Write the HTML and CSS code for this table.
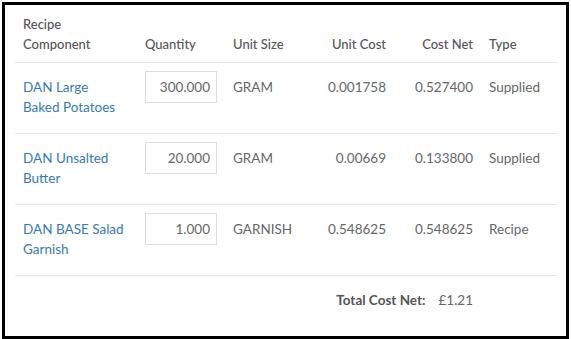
FILE: index.html
```html
<!DOCTYPE html>
<html lang="en">
<head>
    <meta charset="UTF-8">
    <meta name="viewport" content="width=device-width, initial-scale=1.0">
    <title>Recipe Costing</title>
    <link rel="stylesheet" href="styles.css">
</head>
<body>

    <div class="frame">
        <table class="cost-table">
            <colgroup>
                <col class="col-name">
                <col class="col-qty">
                <col class="col-unit">
                <col class="col-cost">
                <col class="col-net">
                <col class="col-type">
            </colgroup>
            <thead>
                <tr>
                    <th class="name">Recipe Component</th>
                    <th>Quantity</th>
                    <th>Unit Size</th>
                    <th class="num">Unit Cost</th>
                    <th class="num">Cost Net</th>
                    <th>Type</th>
                </tr>
            </thead>
            <tbody>
                <tr>
                    <td class="name"><a href="#">DAN Large Baked Potatoes</a></td>
                    <td><input type="text" class="qty-input" value="300.000"></td>
                    <td>GRAM</td>
                    <td class="num">0.001758</td>
                    <td class="num">0.527400</td>
                    <td>Supplied</td>
                </tr>
                <tr>
                    <td class="name"><a href="#">DAN Unsalted Butter</a></td>
                    <td><input type="text" class="qty-input" value="20.000"></td>
                    <td>GRAM</td>
                    <td class="num">0.00669</td>
                    <td class="num">0.133800</td>
                    <td>Supplied</td>
                </tr>
                <tr>
                    <td class="name"><a href="#">DAN BASE Salad Garnish</a></td>
                    <td><input type="text" class="qty-input" value="1.000"></td>
                    <td>GARNISH</td>
                    <td class="num">0.548625</td>
                    <td class="num">0.548625</td>
                    <td>Recipe</td>
                </tr>
            </tbody>
            <tfoot>
                <tr>
                    <td colspan="3"></td>
                    <td colspan="2" class="num"><strong>Total Cost Net:</strong><span class="total-value">£1.21</span></td>
                    <td></td>
                </tr>
            </tfoot>
        </table>
    </div>

</body>
</html>
```

FILE: styles.css
```css
html, body {
    margin: 0;
    padding: 0;
    background-color: #fff;
}
body {
    font-family: Lato, "Open Sans", sans-serif;
    font-size: 13.5px;
    line-height: 20px;
    color: #666;
}
.frame {
    margin: 2px 2px 0;
    height: 337px;
    box-sizing: border-box;
    border: 3px solid #000;
    padding: 1px 9px 0 10px;
    overflow: hidden;
}
.cost-table {
    width: 100%;
    border-collapse: collapse;
    table-layout: fixed;
}
.col-name { width: 122px; }
.col-qty { width: 88px; }
.col-unit { width: 85px; }
.col-cost { width: 84px; }
.col-net { width: 87px; }
.col-type { width: 76px; }
.cost-table th {
    font-size: 13px;
    font-weight: 500;
    color: #555;
    text-align: left;
    vertical-align: bottom;
    padding: 8px;
    border-bottom: 1px solid #e6e6e6;
}
.cost-table td {
    vertical-align: baseline;
    padding: 8px 8px 16px;
    border-bottom: 1px solid #e6e6e6;
}
.cost-table .name {
    padding-right: 12px;
}
.cost-table .num {
    text-align: right;
}
.cost-table a {
    color: #337ab7;
    text-decoration: none;
}
.qty-input {
    display: block;
    width: 100%;
    height: 32px;
    box-sizing: border-box;
    margin: 0;
    padding: 0 6px;
    border: 1px solid #ddd;
    border-radius: 0;
    font-family: inherit;
    font-size: 13.5px;
    color: #666;
    text-align: right;
}
.cost-table tfoot td {
    border-bottom: none;
    padding: 14px 8px 8px;
}
.cost-table tfoot strong {
    color: #555;
}
.total-value {
    margin-left: 13px;
}
```
